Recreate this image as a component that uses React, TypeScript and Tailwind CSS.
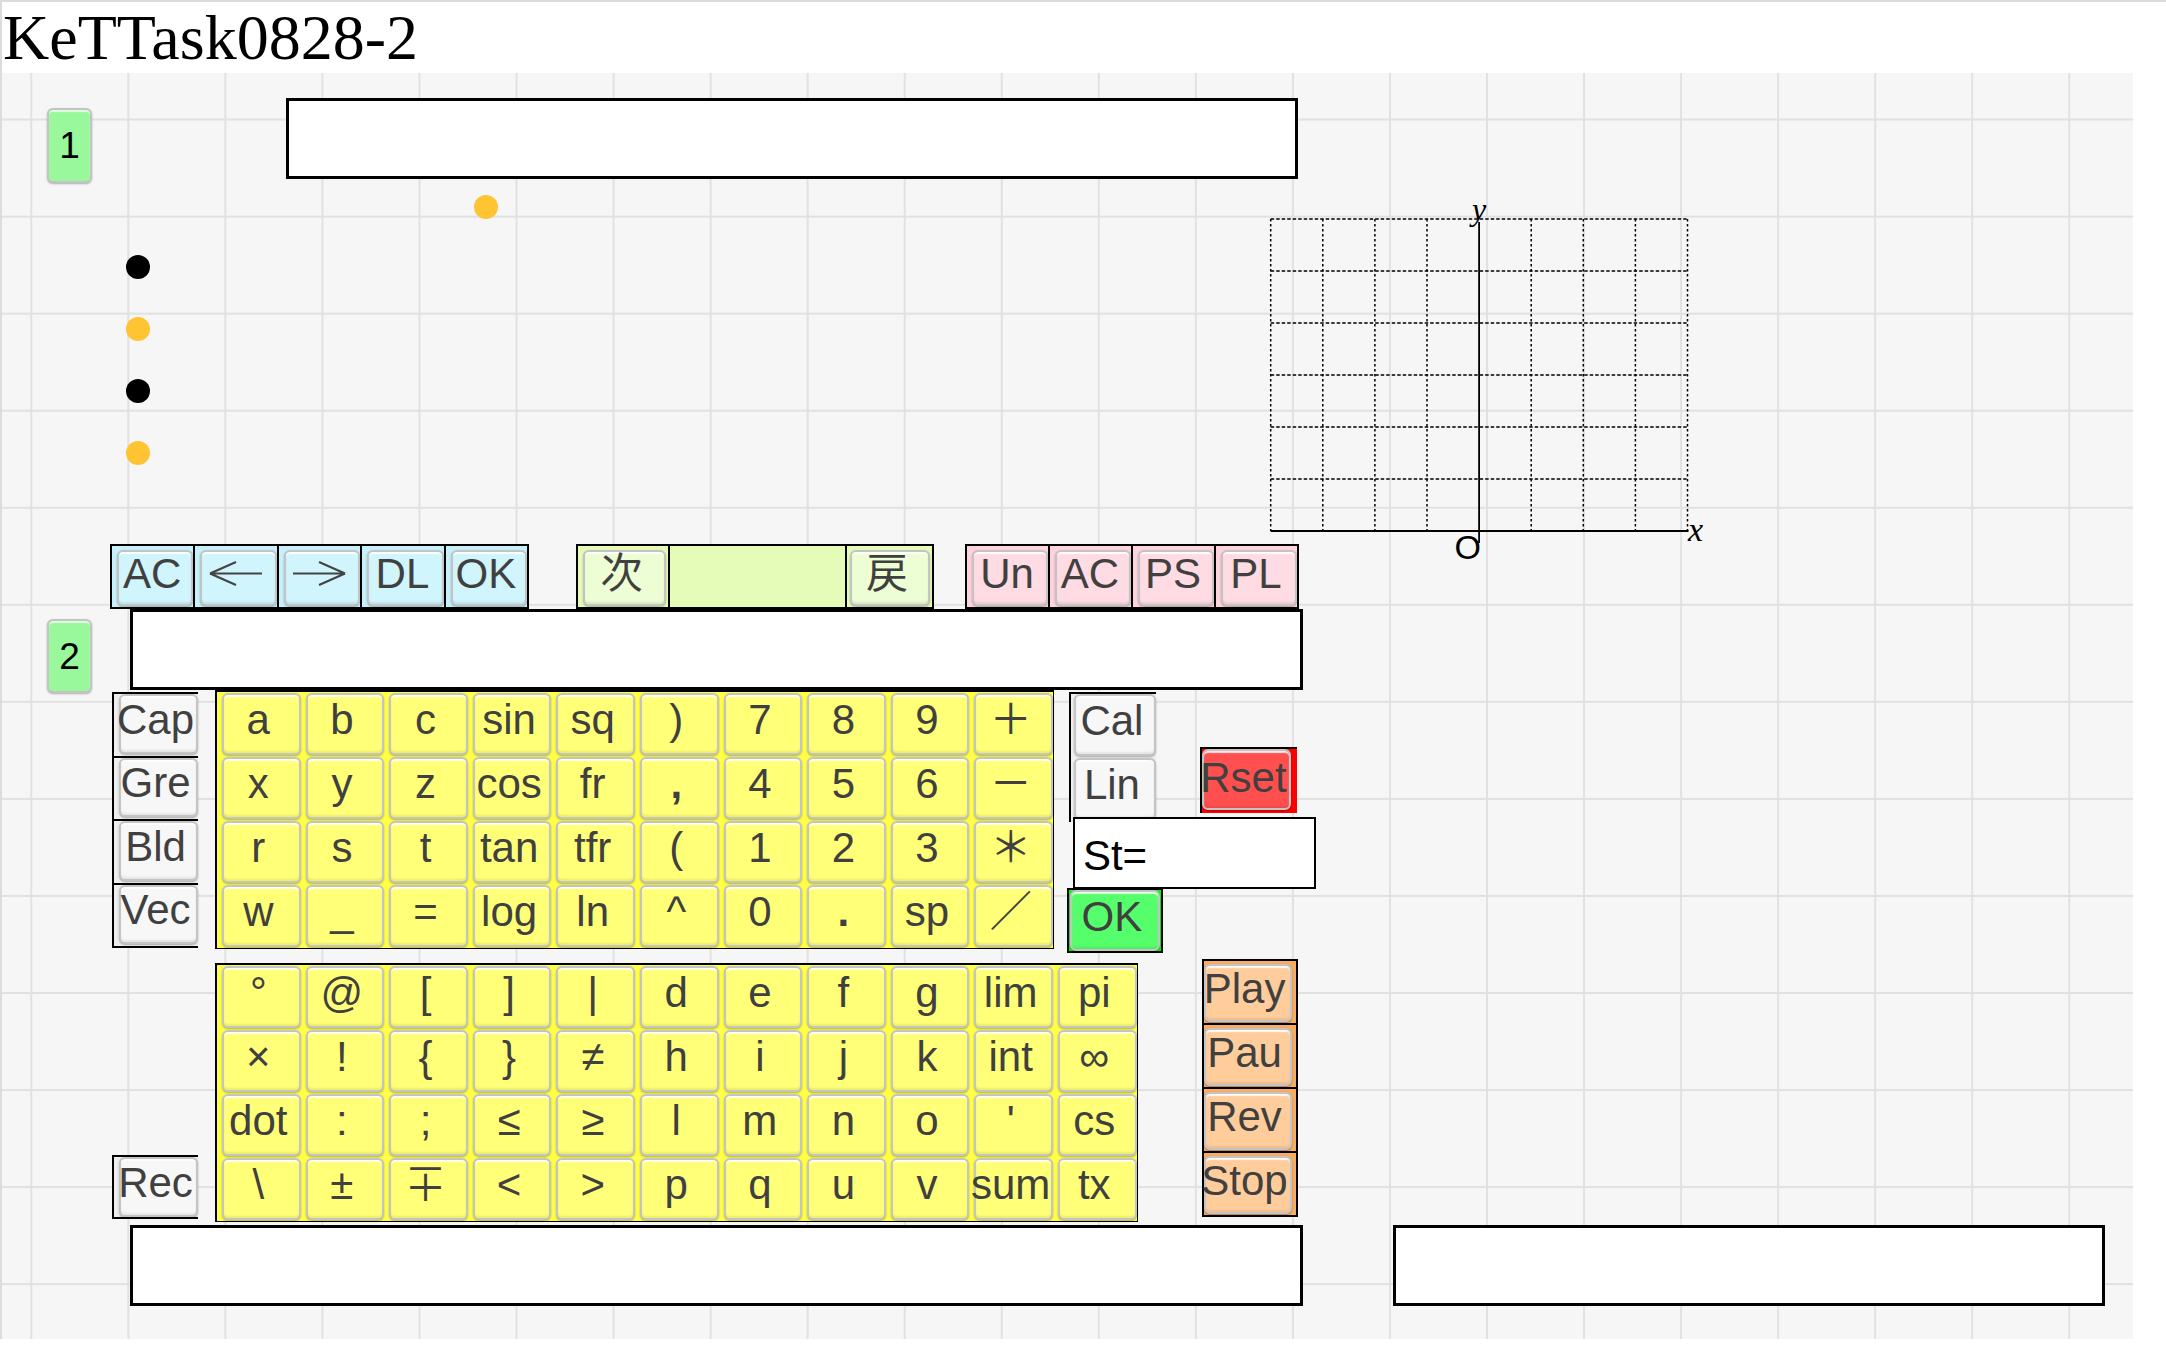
import type { ReactNode } from 'react'

const TOP_KEYS = [
  ['a', 'b', 'c', 'sin', 'sq', ')', '7', '8', '9', '＋'],
  ['x', 'y', 'z', 'cos', 'fr', ',', '4', '5', '6', '－'],
  ['r', 's', 't', 'tan', 'tfr', '(', '1', '2', '3', '＊'],
  ['w', '_', '=', 'log', 'ln', '^', '0', '.', 'sp', '／'],
]

const LOWER_KEYS = [
  ['°', '@', '[', ']', '|', 'd', 'e', 'f', 'g', 'lim', 'pi'],
  ['×', '!', '{', '}', '≠', 'h', 'i', 'j', 'k', 'int', '∞'],
  ['dot', ':', ';', '≤', '≥', 'l', 'm', 'n', 'o', "'", 'cs'],
  ['\\', '±', '∓', '<', '>', 'p', 'q', 'u', 'v', 'sum', 'tx'],
]

const SIDE_KEYS = ['Cap', 'Gre', 'Bld', 'Vec']
const MEDIA_KEYS = ['Play', 'Pau', 'Rev', 'Stop']
const EDIT_KEYS = ['Un', 'AC', 'PS', 'PL']

const KEY_BASE =
  'flex h-full w-full items-center justify-center whitespace-nowrap rounded-[6px] border-2 border-[#c4c4c4] pr-[6px] text-[42px] leading-none text-[#404040] shadow-[inset_0_2px_1px_rgba(255,255,255,0.85),inset_0_-2px_2px_rgba(0,0,0,0.08),0_1px_2px_rgba(0,0,0,0.3)]'

function Key({ children, face, className = 'pb-[8px]' }: { children: ReactNode; face: string; className?: string }) {
  return <div className={`${KEY_BASE} ${face} ${className}`}>{children}</div>
}

function NumKey({ label, className }: { label: string; className: string }) {
  return (
    <div
      className={`flex w-[45px] shrink-0 items-center justify-center rounded-[6px] border-2 border-[#c4c4c4] bg-[#98f89b] text-[37px] leading-none text-black shadow-[inset_0_2px_1px_rgba(255,255,255,0.7),0_1px_2px_rgba(0,0,0,0.3)] ${className}`}
    >
      {label}
    </div>
  )
}

function Arrow({ right }: { right?: boolean }) {
  return (
    <svg width="57" height="27" viewBox="0 0 57 27">
      <path
        d={right ? 'M2 13.5H54M54 13.5L28 2M54 13.5L28 25' : 'M3 13.5H55M3 13.5L29 2M3 13.5L29 25'}
        fill="none"
        stroke="#444"
        strokeWidth="2.2"
      />
    </svg>
  )
}

function Box({ className }: { className: string }) {
  return <div className={`h-[81px] shrink-0 border-[3px] border-black bg-white ${className}`} />
}

function Graph() {
  const x0 = 0.7
  const y0 = 14
  const cw = 52.1
  const rh = 52
  const xs = Array.from({ length: 9 }, (_, i) => x0 + i * cw)
  const ys = Array.from({ length: 6 }, (_, i) => y0 + i * rh)
  const axisX = xs[4]
  const axisY = y0 + 6 * rh
  return (
    <svg width="440" height="360" viewBox="0 0 440 360" className="mt-[132px] shrink-0 overflow-visible">
      {xs.map((x, i) =>
        i === 4 ? null : (
          <line key={'v' + i} x1={x} y1={y0} x2={x} y2={axisY} stroke="#000" strokeWidth="1.5" strokeDasharray="2.5 2.5" />
        )
      )}
      {ys.map((y, i) => (
        <line key={'h' + i} x1={x0} y1={y} x2={xs[8]} y2={y} stroke="#000" strokeWidth="1.5" strokeDasharray="3.5 2" />
      ))}
      <line x1={axisX} y1={y0 + 3} x2={axisX} y2={338} stroke="#000" strokeWidth="1.8" />
      <line x1={x0} y1={axisY} x2={xs[8] + 1} y2={axisY} stroke="#000" strokeWidth="1.8" />
      <text x={axisX} y="15" textAnchor="middle" fontSize="32" fontStyle="italic" fontFamily="'Liberation Serif', serif">
        y
      </text>
      <text x="418" y="336" fontSize="34" fontStyle="italic" fontFamily="'Liberation Serif', serif">
        x
      </text>
      <text x="211" y="354" textAnchor="end" fontSize="34" fontFamily="'Liberation Sans', sans-serif">
        O
      </text>
    </svg>
  )
}

export default function App() {
  return (
    <div className="border-l-2 border-t-2 border-[#dcdcdc] bg-white text-black [font-family:'Liberation_Sans','Noto_Sans_CJK_JP',sans-serif]">
      <h1 className="h-[71px] pl-[1px] text-[64px] leading-[71px] [font-family:'Liberation_Serif',serif]">KeTTask0828-2</h1>

      <div className="flex h-[1266px] w-[2131px] flex-col bg-[#f6f6f6] [background-image:linear-gradient(to_right,#e1e1e1_2px,transparent_2px),linear-gradient(to_bottom,#e1e1e1_2px,transparent_2px)] [background-position:28.3px_45.6px] [background-size:97.05px_97.05px]">
        {/* question 1 + graph */}
        <div className="flex h-[471px] shrink-0">
          <div className="flex w-[1268px] shrink-0 flex-col">
            <div className="flex items-start pt-[25px]">
              <NumKey label="1" className="ml-[45px] mt-[10px] h-[75px]" />
              <Box className="ml-[194px] w-[1012px]" />
            </div>
            <div className="ml-[472px] mt-[12px] size-[24px] rounded-full bg-[#ffc431]" />
            <div className="ml-[124px] mt-[36px] flex flex-col gap-[38px]">
              {['bg-black', 'bg-[#ffc431]', 'bg-black', 'bg-[#ffc431]'].map((c, i) => (
                <div key={i} className={`size-[24px] rounded-full ${c}`} />
              ))}
            </div>
          </div>
          <Graph />
        </div>

        {/* toolbar */}
        <div className="flex h-[65px] shrink-0">
          <div className="ml-[108px] flex w-[419px] border-2 border-black bg-[#c6f1fa]">
            {['AC', 'left', 'right', 'DL', 'OK'].map((label, i) => (
              <div key={label} className={`flex-1 pb-[1px] pl-[5px] pt-[4px] ${i ? 'border-l-2 border-black' : ''}`}>
                <Key face="bg-[#d0f5fc]" className="pb-[9px]">
                  {label === 'left' ? <Arrow /> : label === 'right' ? <Arrow right /> : label}
                </Key>
              </div>
            ))}
          </div>
          <div className="ml-[47px] flex w-[358px] border-2 border-black bg-[#e4fcb7]">
            <div className="w-[90px] pb-[1px] pl-[5px] pr-[2px] pt-[4px]">
              <Key face="bg-[#edfdd4]" className="pb-[9px]">次</Key>
            </div>
            <div className="w-[179px] border-x-2 border-black" />
            <div className="flex-1 pb-[1px] pl-[3px] pr-[2px] pt-[4px]">
              <Key face="bg-[#edfdd4]" className="pb-[9px]">戻</Key>
            </div>
          </div>
          <div className="ml-[31px] flex w-[334px] border-2 border-black bg-[#ffd3de]">
            {EDIT_KEYS.map((label, i) => (
              <div key={label} className={`flex-1 pb-[1px] pl-[5px] pt-[4px] ${i ? 'border-l-2 border-black' : ''}`}>
                <Key face="bg-[#ffdbe4]" className="pb-[9px]">{label}</Key>
              </div>
            ))}
          </div>
        </div>

        {/* question 2 */}
        <div className="flex h-[81px] shrink-0 items-start">
          <NumKey label="2" className="ml-[45px] mt-[10px] h-[74px]" />
          <Box className="ml-[38px] w-[1173px]" />
        </div>

        {/* keyboard, upper part */}
        <div className="flex h-[264px] shrink-0 items-start">
          <div className="ml-[110px] mt-[2px] flex h-[256px] w-[86px] flex-col border-y-2 border-l-2 border-black bg-[#efefef]">
            {SIDE_KEYS.map((label, i) => (
              <div key={label} className={`flex-1 pb-[2px] pl-[5px] ${i ? 'border-t-2 border-black' : ''}`}>
                <Key face="bg-[#f7f7f7]">{label}</Key>
              </div>
            ))}
          </div>
          <div className="ml-[17px] grid grid-cols-[repeat(10,83.6px)] grid-rows-[repeat(4,64px)] border-b border-l-2 border-r border-t-2 border-black bg-[#ffff4a]">
            {TOP_KEYS.flat().map((label, i) => (
              <div key={i} className="pb-[1px] pl-[5px] pt-[1px]">
                <Key face="bg-[#ffff78]" className={label === ',' || label === '.' ? 'pb-[8px] font-bold' : 'pb-[8px]'}>
                  {label}
                </Key>
              </div>
            ))}
          </div>
          <div className="ml-[13px] flex flex-col">
            <div className="flex items-start">
              <div className="ml-[2px] mt-[2px] flex w-[87px] flex-col border-l-2 border-t-2 border-black bg-[#efefef]">
                {['Cal', 'Lin'].map((label) => (
                  <div key={label} className="h-[64px] pb-[2px] pl-[3px]">
                    <Key face="bg-[#f7f7f7]">{label}</Key>
                  </div>
                ))}
              </div>
              <div className="ml-[44px] mt-[57px] h-[66px] w-[97px] border-l-2 border-t-2 border-black bg-[#ff0000] pb-[3px] pr-[6px]">
                <Key face="bg-[#ff4f4f]" className="pb-[4px]">Rset</Key>
              </div>
            </div>
            <div className="-mt-[5px] ml-[6px] flex h-[72px] w-[243px] items-center border-2 border-black bg-white pl-[8px] pt-[5px] text-[42px] leading-none text-black">
              St=
            </div>
            <div className="-mt-[1px] h-[65px] w-[96px] border-2 border-black bg-[#00ff00] pl-[1px] pr-[1px]">
              <Key face="bg-[#55ff6b]">OK</Key>
            </div>
          </div>
        </div>

        {/* keyboard, lower part */}
        <div className="mt-[5px] flex h-[260px] shrink-0 items-start">
          <div className="ml-[110px] mt-[196px] h-[64px] w-[86px] border-y-2 border-l-2 border-black bg-[#efefef] pl-[5px]">
            <Key face="bg-[#f7f7f7]">Rec</Key>
          </div>
          <div className="ml-[17px] mt-[4px] grid grid-cols-[repeat(11,83.6px)] grid-rows-[repeat(4,64px)] border-b border-l-2 border-r border-t-2 border-black bg-[#ffff4a]">
            {LOWER_KEYS.flat().map((label, i) => (
              <div key={i} className="pb-[1px] pl-[5px] pt-[1px]">
                <Key face="bg-[#ffff78]">{label}</Key>
              </div>
            ))}
          </div>
          <div className="ml-[64px] flex h-[258px] w-[96px] flex-col border-2 border-black bg-[#f7ad66]">
            {MEDIA_KEYS.map((label, i) => (
              <div key={label} className={`flex-1 pb-[1px] pr-[4px] pt-[3px] ${i ? 'border-t-2 border-black' : ''}`}>
                <Key face="bg-[#ffcd9c]">{label}</Key>
              </div>
            ))}
          </div>
        </div>

        {/* answer boxes */}
        <div className="mt-[6px] flex shrink-0">
          <Box className="ml-[128px] w-[1173px]" />
          <Box className="ml-[90px] w-[712px]" />
        </div>
      </div>
    </div>
  )
}
